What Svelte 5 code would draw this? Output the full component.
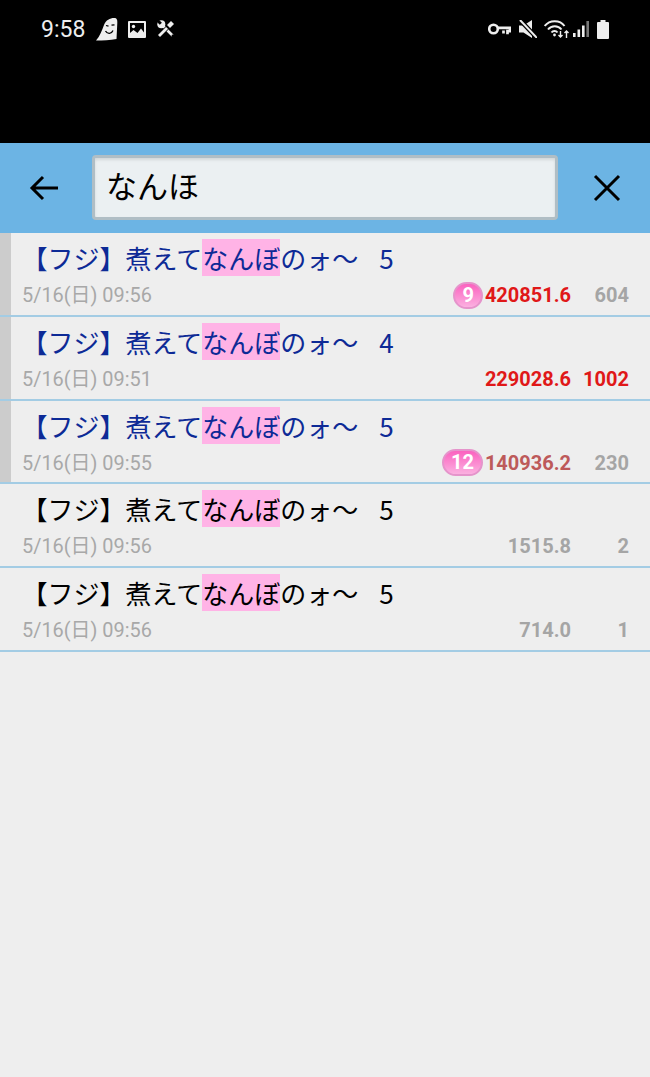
<script>
  const rows = [
    { n: '5', date: '5/16(日) 09:56', badge: '9', score: '420851.6', count: '604', read: true, scoreCls: 'hot', countCls: '' },
    { n: '4', date: '5/16(日) 09:51', badge: '', score: '229028.6', count: '1002', read: true, scoreCls: 'hot', countCls: 'hot' },
    { n: '5', date: '5/16(日) 09:55', badge: '12', score: '140936.2', count: '230', read: true, scoreCls: 'warm', countCls: '' },
    { n: '5', date: '5/16(日) 09:56', badge: '', score: '1515.8', count: '2', read: false, scoreCls: '', countCls: '' },
    { n: '5', date: '5/16(日) 09:56', badge: '', score: '714.0', count: '1', read: false, scoreCls: '', countCls: '' }
  ];
</script>

<div class="page">
  <div class="top">
    <div class="status">
      <span class="time">9:58</span>
      <svg class="ic ghost" width="22" height="23" viewBox="0 0 22 23">
        <path d="M0 22.500 C4 18 6 12 8 7 C10 2 14 0 18 0 C21 0 21.500 2 21.300 5 L20.500 21 C14 22.500 7 22.500 0 22.500Z" fill="#eee"/>
        <path d="M10 7.500 12.500 8.200M15.500 7.200 18.500 6.800" stroke="#000" stroke-width="1.200"/>
        <path d="M9.500 13 C11.500 16.500 15.500 16 17 12.500" stroke="#000" stroke-width="1.300" fill="none"/>
      </svg>
      <svg class="ic image" width="18" height="17" viewBox="0 0 18 17">
        <path fill-rule="evenodd" d="M1 0h16a1 1 0 0 1 1 1v15a1 1 0 0 1-1 1H1a1 1 0 0 1-1-1V1a1 1 0 0 1 1-1Zm1 2v10l3.500-3 4 3 3.500-4.500 3 4V2Z" fill="#eee"/>
        <circle cx="5.500" cy="5.500" r="1.700" fill="#eee"/>
      </svg>
      <svg class="ic" width="18" height="18" viewBox="0 0 18 18" fill="none">
        <path d="M5 5 15.500 15.500" stroke="#eee" stroke-width="2.600"/>
        <circle cx="15.500" cy="15.500" r="0.900" fill="#000"/>
        <circle cx="4.300" cy="4.300" r="4" fill="#eee"/>
        <path d="M3.800 3.800 0.500 0.500" stroke="#000" stroke-width="3"/>
        <path d="M10 8 2 16" stroke="#000" stroke-width="4.200"/>
        <path d="M10 8 2 16" stroke="#eee" stroke-width="2.800"/>
        <path d="M11.500 6.500 15.500 2.500" stroke="#eee" stroke-width="4.200"/>
      </svg>
      <span class="spacer"></span>
      <svg class="ic key" width="23" height="12" viewBox="0 0 23 12" fill="none" stroke="#eee">
        <circle cx="5.500" cy="6" r="4.300" stroke-width="2.600"/>
        <path d="M10 4.800h12v3.400h-2.500v3M15.500 7.500v3" stroke-width="2.700"/>
      </svg>
      <svg class="ic mute" width="18" height="18" viewBox="0 0 18 18">
        <path d="M0 5.500h4.500L13 0v18l-8.500-5.500H0Z" fill="#eee"/>
        <path d="M1 0 18 18" stroke="#000" stroke-width="4.500"/>
        <path d="M1 0 18 18" stroke="#eee" stroke-width="2"/>
      </svg>
      <svg class="ic wifi" width="25" height="18" viewBox="0 0 25 18" fill="none" stroke="#eee" stroke-width="2">
        <path d="M0.700 6 C5.500 -0.500 16 -0.500 20.500 6"/>
        <path d="M4 9.500 C7.500 5 14 5 17.500 9.500"/>
        <path d="M7.500 12.500 C9 10.500 12 10.500 13.500 12.500"/>
        <circle cx="10.500" cy="15" r="1.400" fill="#eee" stroke="none"/>
        <path d="M16.500 11v6M14.500 15l2 2 2-2M22.500 18v-7M20.500 13l2-2 2 2" stroke-width="1.400"/>
      </svg>
      <svg class="ic signal" width="16" height="16" viewBox="0 0 16 16">
        <rect x="0" y="12" width="2.600" height="4" fill="#eee"/>
        <rect x="4.500" y="8.500" width="2.600" height="7.500" fill="#eee"/>
        <rect x="9" y="4.500" width="2.600" height="11.500" fill="#eee"/>
        <rect x="13.400" y="0" width="2.600" height="16" fill="#777"/>
      </svg>
      <svg class="ic batt" width="12" height="19" viewBox="0 0 12 19">
        <path d="M3.500 0h5v2H11a1 1 0 0 1 1 1v15a1 1 0 0 1-1 1H1a1 1 0 0 1-1-1V3a1 1 0 0 1 1-1h2.500Z" fill="#eee"/>
      </svg>
    </div>
  </div>

  <header class="bar">
    <button class="icon-btn back" aria-label="戻る">
      <svg width="32" height="32" viewBox="0 0 32 32" fill="none" stroke="#000" stroke-width="3">
        <path d="M30 16H4M15 5 4 16l11 11"/>
      </svg>
    </button>
    <div class="search">なんほ</div>
    <button class="icon-btn close" aria-label="閉じる">
      <svg width="28" height="28" viewBox="0 0 28 28" fill="none" stroke="#000" stroke-width="3">
        <path d="M2 2 26 26M26 2 2 26"/>
      </svg>
    </button>
  </header>

  <ul class="list">
    {#each rows as r}
      <li class="row" class:read={r.read}>
        <div class="title">【フジ】煮えて<mark>なんぼ</mark>のォ〜<span class="num">{r.n}</span></div>
        <div class="meta">
          <span class="date">{r.date}</span>
          <span class="right">
            {#if r.badge}<span class="badge">{r.badge}</span>{/if}
            <span class="score {r.scoreCls}">{r.score}</span>
            <span class="count {r.countCls}">{r.count}</span>
          </span>
        </div>
      </li>
    {/each}
  </ul>
</div>

<style>
  :global(body) {
    margin: 0;
    background: #eeeeee;
  }
  .page {
    width: 650px;
    height: 1077px;
    background: #eeeeee;
    overflow: hidden;
    font-family: Roboto, "Noto Sans CJK JP", sans-serif;
  }
  .top {
    height: 143px;
    background: #000;
  }
  .status {
    height: 58px;
    display: flex;
    align-items: center;
    padding: 0 41px;
    color: #eee;
  }
  .time {
    font-size: 23px;
    margin-right: 11px;
  }
  .ic {
    display: block;
  }
  .ghost {
    margin-right: 10px;
  }
  .image {
    margin-right: 11px;
  }
  .spacer {
    flex: 1;
  }
  .key {
    margin-right: 8px;
  }
  .mute {
    margin-right: 7px;
  }
  .wifi {
    margin-right: 4px;
  }
  .signal {
    margin-right: 8px;
  }
  .bar {
    height: 90px;
    background: #6cb4e4;
    display: flex;
    align-items: center;
  }
  .icon-btn {
    border: 0;
    background: none;
    padding: 0;
    display: flex;
    align-items: center;
    justify-content: center;
  }
  .back {
    width: 92px;
    height: 90px;
    padding-right: 5px;
    box-sizing: border-box;
  }
  .close {
    width: 92px;
    height: 90px;
    padding-left: 6px;
    box-sizing: border-box;
  }
  .search {
    flex: 1;
    height: 65px;
    margin-top: -2px;
    box-sizing: border-box;
    background: #ebf0f2;
    border: 3px solid #b0bec5;
    border-radius: 4px;
    box-shadow: inset 0 2px 3px rgba(0, 0, 0, 0.1);
    font-size: 31px;
    line-height: 59px;
    padding-left: 11px;
    color: #000;
  }
  .list {
    list-style: none;
    margin: 0;
    padding: 0;
  }
  .row {
    height: 83.75px;
    box-sizing: border-box;
    padding: 6px 21px 0 21px;
    border-bottom: 2px solid #a3cce4;
    color: #000;
  }
  .row.read {
    box-shadow: inset 11px 0 0 #cccccc;
    color: #0d2a96;
  }
  .title {
    font-family: "Noto Sans CJK JP", sans-serif;
    font-size: 26px;
    line-height: 37px;
    height: 37px;
    white-space: nowrap;
    padding-left: 0.6px;
  }
  mark {
    background: #ffb3e6;
    color: inherit;
  }
  .num {
    margin-left: 21px;
  }
  .meta {
    display: flex;
    align-items: center;
    justify-content: space-between;
    height: 32px;
    margin-top: 3px;
  }
  .date {
    font-size: 19.9px;
    color: #a8a8a8;
    margin-left: 1px;
    margin-bottom: 3px;
  }
  .right {
    display: flex;
    align-items: center;
  }
  .score,
  .count {
    font-size: 20px;
    font-weight: 700;
    color: #a5a5a5;
  }
  .count {
    width: 58px;
    text-align: right;
  }
  .score.hot,
  .count.hot {
    color: #e01818;
  }
  .score.warm {
    color: #bd5a5a;
  }
  .badge {
    min-width: 29px;
    height: 27px;
    box-sizing: border-box;
    padding: 0 7px;
    margin-right: 2px;
    border-radius: 14px;
    background: linear-gradient(#fb62bf, #fbb0e0);
    border: 2px solid #e594cb;
    color: #fff;
    font-size: 20px;
    font-weight: 700;
    line-height: 23px;
    text-align: center;
  }
</style>
